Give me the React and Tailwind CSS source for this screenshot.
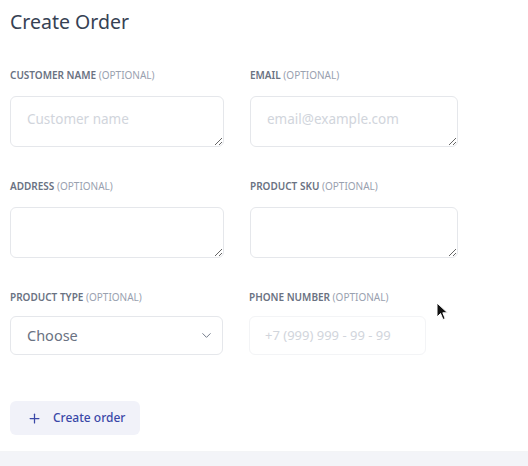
import { ChevronDown, Plus } from 'lucide-react'

const font = { fontFamily: '"Noto Sans", "Open Sans", sans-serif' }

function Label({ children }) {
  return (
    <div className="h-4 leading-4 text-[10px] font-semibold uppercase text-gray-500 whitespace-nowrap">
      {children} <span className="font-normal text-gray-400">(optional)</span>
    </div>
  )
}

function Area({ placeholder, w }) {
  return (
    <textarea
      placeholder={placeholder}
      className={`block ${w} h-[51px] rounded-md border border-gray-200 bg-white px-4 pt-[12px] text-[13.5px] leading-5 text-gray-700 placeholder:text-gray-300 outline-none`}
      style={font}
    />
  )
}

export default function App() {
  return (
    <div className="relative w-[528px] h-[466px] bg-white overflow-hidden" style={font}>
      <div className="px-[10px] pt-[8px]">
        <h1 className="text-[19.5px] leading-7 text-gray-700">Create Order</h1>

        <div className="mt-[31px] grid grid-cols-[214px_208px] gap-x-[26px]">
          <div>
            <Label>Customer name</Label>
            <div className="mt-[13px]"><Area placeholder="Customer name" w="w-[214px]" /></div>
          </div>
          <div>
            <Label>Email</Label>
            <div className="mt-[13px]"><Area placeholder="email@example.com" w="w-[208px]" /></div>
          </div>
        </div>

        <div className="mt-[31px] grid grid-cols-[214px_208px] gap-x-[26px]">
          <div>
            <Label>Address</Label>
            <div className="mt-[13px]"><Area placeholder="" w="w-[214px]" /></div>
          </div>
          <div>
            <Label>Product SKU</Label>
            <div className="mt-[13px]"><Area placeholder="" w="w-[208px]" /></div>
          </div>
        </div>

        <div className="mt-[31px] grid grid-cols-[214px_208px] gap-x-[25px]">
          <div>
            <Label>Product type</Label>
            <div className="mt-[11px] w-[213px] h-[39px] rounded-md border border-gray-200 flex items-center justify-between pl-4 pr-[8px]">
              <span className="text-[14.5px] text-gray-500">Choose</span>
              <ChevronDown size={15} strokeWidth={1.5} className="text-gray-500" />
            </div>
          </div>
          <div>
            <Label>Phone number</Label>
            <div className="mt-[11px] w-[177px] h-[39px] rounded-md border border-gray-100 flex items-center px-[15px]">
              <span className="text-[13px] text-gray-300">+7 (999) 999 - 99 - 99</span>
            </div>
          </div>
        </div>

        <button className="mt-[46px] w-[130px] h-[34px] rounded-md bg-[#f1f2f9] flex items-center gap-[11px] pl-[17px] text-[12px] font-medium text-[#3a48a8]">
          <Plus size={15} strokeWidth={2} />
          Create order
        </button>
      </div>

      <div className="absolute left-0 right-0 bottom-0 h-[15px] bg-[#f3f4f8] border-t border-gray-100" />

      <svg className="absolute left-[436px] top-[302px]" width="14" height="20" viewBox="0 0 14 20">
        <path d="M1 1 L1 15 L4.5 11.5 L7 17.5 L9.2 16.6 L6.8 10.8 L11.5 10.8 Z" fill="#111" stroke="#fff" strokeWidth="1" />
      </svg>
    </div>
  )
}
